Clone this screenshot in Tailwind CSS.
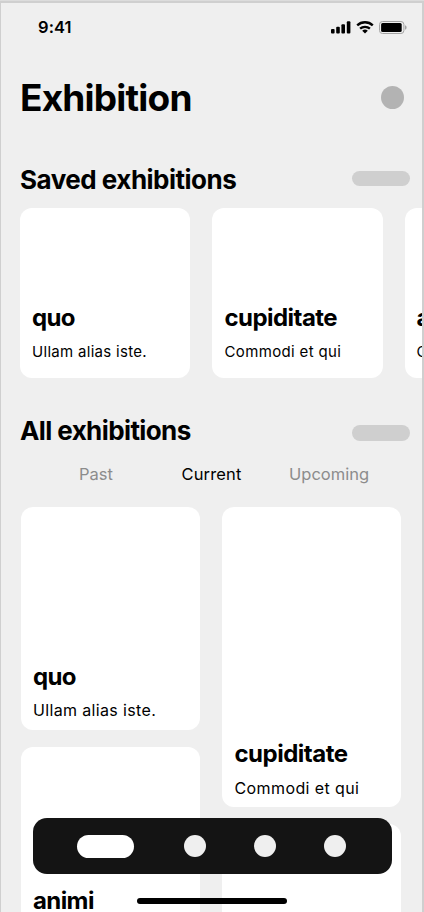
<!DOCTYPE html>
<html lang="en">
<head>
<meta charset="utf-8">
<title>Exhibition</title>
<script src="https://cdn.jsdelivr.net/npm/@tailwindcss/browser@4"></script>
</head>
<body class="h-[912px] w-[424px] overflow-hidden bg-[#dcdcdc] pt-px font-['Inter',sans-serif] text-black">
<div class="relative h-[911px] w-[424px] overflow-hidden border-t-2 border-r-2 border-l border-[#cfcfcf] bg-[#efefef]">
  <header class="flex h-12 items-center justify-between pr-[15px] pl-[37px]">
    <span class="text-[16.5px] leading-6 font-semibold tracking-[0.1px]">9:41</span>
    <div class="flex items-center gap-[5px]">
      <svg class="h-[13px] w-5" viewBox="0 0 20 13"><rect x="0" y="8" width="3.6" height="4.6" rx="1"/><rect x="5.2" y="5.8" width="3.6" height="6.8" rx="1"/><rect x="10.4" y="3.2" width="3.6" height="9.4" rx="1"/><rect x="15.8" y=".3" width="3.6" height="12.3" rx="1"/></svg>
      <svg class="h-[13px] w-[18px]" viewBox="0 0 18 13" fill="none" stroke="#000" stroke-width="2.3"><path d="M1.2 4.4a11.2 11.2 0 0 1 15.6 0M4.1 7.7a7.2 7.2 0 0 1 9.8 0"/><path d="M9 12.5 6.2 9.8a4.2 4.2 0 0 1 5.6 0z" fill="#000" stroke="none"/></svg>
      <svg class="h-[13px] w-[28px]" viewBox="0 0 28 13"><rect x=".5" y=".5" width="24.4" height="12" rx="3" fill="none" stroke="#a3a3a3"/><rect x="2.1" y="2" width="20.6" height="9" rx="1.5"/><path d="M26 4.3v4.4a2.3 2.3 0 0 0 0-4.4" fill="#a3a3a3"/></svg>
    </div>
  </header>

  <div class="mt-[23px] flex h-12 items-center justify-between pr-[18px] pl-[19px]">
    <h1 class="text-[37px] leading-[48px] font-bold tracking-[-0.8px]">Exhibition</h1>
    <div class="mb-px size-[23px] rounded-full bg-[#b3b3b3]"></div>
  </div>

  <section class="mt-[42px]">
    <div class="flex h-8 items-center justify-between pr-3 pl-[19px]">
      <h2 class="text-[26px] leading-8 font-bold tracking-[-0.5px]">Saved exhibitions</h2>
      <div class="mb-[3px] h-[15px] w-[58px] rounded-full bg-[#cfcfcf]"></div>
    </div>
    <div class="mt-3 flex gap-[22px] overflow-hidden pl-[19px]">
      <article class="flex h-[170px] w-[170px] shrink-0 flex-col justify-end rounded-xl bg-white pr-3 pb-4 pl-3">
        <h3 class="text-[24px] leading-[30px] font-bold tracking-[-0.6px]">quo</h3>
        <p class="mt-[9px] text-[15px] leading-5 tracking-[0.3px] whitespace-nowrap">Ullam alias iste.</p>
      </article>
      <article class="flex h-[170px] w-[170.5px] shrink-0 flex-col justify-end rounded-xl bg-white pr-3 pb-4 pl-[12.5px]">
        <h3 class="text-[24px] leading-[30px] font-bold tracking-[-0.55px]">cupiditate</h3>
        <p class="mt-[9px] text-[15px] leading-5 tracking-[0.35px] whitespace-nowrap">Commodi et qui</p>
      </article>
      <article class="flex h-[170px] w-[170px] shrink-0 flex-col justify-end rounded-xl bg-white px-3 pb-4">
        <h3 class="text-[24px] leading-[30px] font-bold tracking-[-0.6px]">animi</h3>
        <p class="mt-[9px] text-[15px] leading-5 tracking-[0.35px] whitespace-nowrap">Commodi et qui</p>
      </article>
    </div>
  </section>

  <section class="mt-[37px]">
    <div class="flex h-8 items-center justify-between pr-3 pl-[19px]">
      <h2 class="text-[26px] leading-8 font-bold tracking-[-0.6px]">All exhibitions</h2>
      <div class="mt-[3px] h-4 w-[58px] rounded-full bg-[#cfcfcf]"></div>
    </div>
    <nav class="mt-[15px] flex h-6 text-[16.5px] leading-6 text-[#8c8c8c]">
      <span class="ml-[78px] w-[102.5px]">Past</span>
      <span class="w-[107.5px] tracking-[0.15px] text-black">Current</span>
      <span>Upcoming</span>
    </nav>
    <div class="mt-[21px] flex gap-[22px] pl-[20px]">
      <div class="flex w-[179px] flex-col gap-[17px]">
        <article class="flex h-[223px] flex-col justify-end rounded-xl bg-white px-3 pb-[10px]">
          <h3 class="text-[24px] leading-[30px] font-bold tracking-[-0.6px]">quo</h3>
          <p class="mt-2 text-[16px] leading-5 tracking-[0.35px] whitespace-nowrap">Ullam alias iste.</p>
        </article>
        <article class="flex h-[223px] flex-col rounded-xl bg-white px-3 pt-[139px]">
          <h3 class="text-[24px] leading-[30px] font-bold tracking-[-0.6px]">animi</h3>
        </article>
      </div>
      <div class="flex w-[179px] flex-col gap-[17px]">
        <article class="flex h-[300px] flex-col justify-end rounded-xl bg-white pr-3 pb-[9px] pl-[12.5px]">
          <h3 class="text-[24px] leading-[30px] font-bold tracking-[-0.5px]">cupiditate</h3>
          <p class="mt-[9px] text-[16px] leading-5 tracking-[0.4px] whitespace-nowrap">Commodi et qui</p>
        </article>
        <article class="h-[223px] rounded-xl bg-white"></article>
      </div>
    </div>
  </section>

  <nav class="absolute top-[815px] left-8 flex h-14 w-[358.5px] items-center rounded-[14px] bg-[#141414] pl-[43.5px]">
    <span class="h-[23px] w-[57.5px] rounded-full bg-white"></span>
    <span class="ml-[49.5px] size-[22.5px] rounded-full bg-[#efefef]"></span>
    <span class="ml-[47.5px] size-[22.5px] rounded-full bg-[#efefef]"></span>
    <span class="ml-[47.5px] size-[22.5px] rounded-full bg-[#efefef]"></span>
  </nav>
  <div class="absolute top-[894.5px] left-[136px] h-[6px] w-[150px] rounded-full bg-black"></div>
</div>
</body>
</html>
